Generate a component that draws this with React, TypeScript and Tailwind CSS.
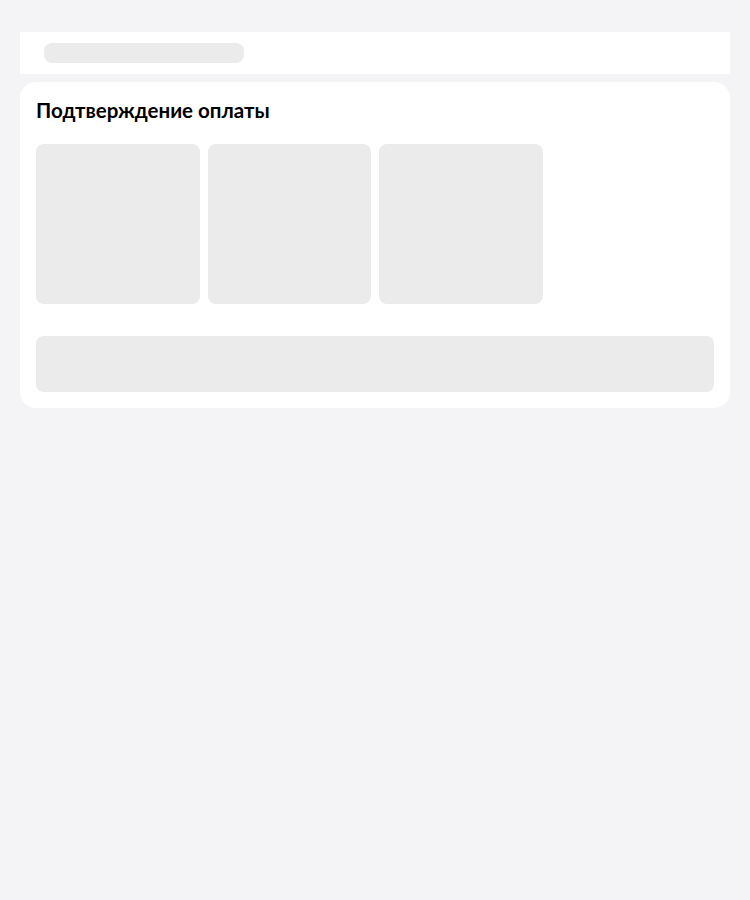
export default function App() {
    return (
        <div className="min-h-[900px] bg-[#f4f4f6] pt-8 px-5" style={{ fontFamily: 'Lato, "Noto Sans", sans-serif' }}>
            <div className="h-[42px] bg-white flex items-center px-6">
                <div className="h-5 w-[200px] rounded-lg bg-[#ebebeb]" />
            </div>
            <div className="mt-2 bg-white rounded-2xl p-4">
                <h1 className="text-[20.5px] leading-6 font-bold text-black mb-[22px]">Подтверждение оплаты</h1>
                <div className="grid grid-cols-4 gap-2">
                    {[0, 1, 2].map((i) => (
                        <div key={i} className="h-40 rounded-lg bg-[#ebebeb]" />
                    ))}
                </div>
                <div className="mt-8 h-14 rounded-lg bg-[#ebebeb]" />
            </div>
        </div>
    );
}
